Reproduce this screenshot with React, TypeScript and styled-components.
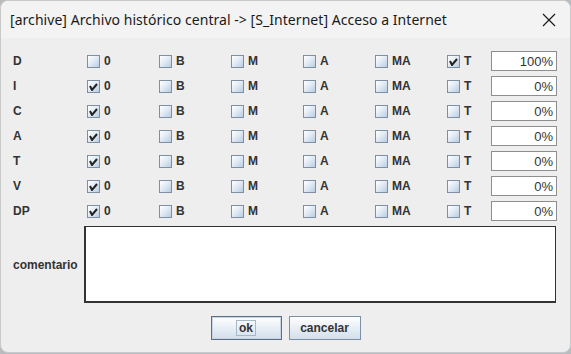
import React from 'react';
import styled, {createGlobalStyle} from 'styled-components';

const GlobalStyle = createGlobalStyle`
  html, body {
    margin: 0;
    padding: 0;
    background: #b9bcbf;
  }
  #root {
    width: 571px;
    height: 354px;
  }
`;

const Window = styled.div`
  box-sizing: border-box;
  width: 571px;
  height: 353px;
  background: #eeeeee;
  border: 1px solid #c9c9c9;
  border-radius: 8px;
  overflow: hidden;
  display: flex;
  flex-direction: column;
`;

const TitleBar = styled.header`
  height: 37px;
  display: flex;
  align-items: center;
  justify-content: space-between;
  padding: 0 14px 0 9px;
  background: #f3f3f3;
  font-family: 'Noto Sans', sans-serif;
  font-size: 14px;
  letter-spacing: 0.05px;
  color: #1a1a1a;
`;

const Body = styled.div`
  padding: 13px 14px 0 11px;
  display: flex;
  flex-direction: column;
  gap: 5px;
  font-family: 'Liberation Sans', Arial, sans-serif;
  font-size: 12px;
  font-weight: bold;
  color: #333333;
`;

const Row = styled.div`
  display: grid;
  grid-template-columns: 75px repeat(5, 72px) 44px 66px;
  height: 20px;
  align-items: center;
`;

const Label = styled.span`
  padding-left: 1px;
`;

const Check = styled.label`
  display: flex;
  align-items: center;
  gap: 4px;
`;

const Box = styled.span`
  box-sizing: border-box;
  width: 13px;
  height: 13px;
  border: 1px solid #7d8fa3;
  background: linear-gradient(135deg, #ffffff 0%, #e3ecf5 45%, #b8cde2 100%);
  display: flex;
  align-items: center;
  justify-content: center;
`;

const Field = styled.div`
  box-sizing: border-box;
  height: 20px;
  border: 1px solid #8e8e8e;
  background: #ffffff;
  text-align: right;
  padding: 2px 3px 0 0;
  font-weight: normal;
  font-size: 13px;
  color: #333333;
`;

const CommentRow = styled.div`
  display: grid;
  grid-template-columns: 72px 1fr;
  align-items: center;
  height: 77px;
`;

const CommentArea = styled.div`
  box-sizing: border-box;
  height: 77px;
  background: #ffffff;
  border: 1px solid #333333;
  border-width: 1px 1px 2px 2px;
`;

const Buttons = styled.div`
  display: flex;
  justify-content: center;
  gap: 7px;
  margin-top: 8px;
  padding-left: 3px;
`;

const Button = styled.button<{$focused?: boolean}>`
  box-sizing: border-box;
  width: ${(p) => (p.$focused ? 71 : 72)}px;
  height: 24px;
  font-family: 'Liberation Sans', Arial, sans-serif;
  font-size: 12px;
  font-weight: bold;
  color: #333333;
  border: 1px solid ${(p) => (p.$focused ? '#5c6f85' : '#7d8fa3')};
  box-shadow: ${(p) => (p.$focused ? 'inset 0 0 0 1px #c6d4e3' : 'none')};
  background: linear-gradient(#ffffff 0%, #eaf0f6 45%, #d2dfec 100%);
  padding: 0;
  display: flex;
  align-items: center;
  justify-content: center;
`;

const FocusText = styled.span`
  outline: 1px solid #a8b8cb;
  padding: 0 2px;
  line-height: 14px;
`;

const CheckMark = () => (
  <svg width="9" height="9" viewBox="0 0 9 9">
    <path d="M1 4 L3 8 L8 2" fill="none" stroke="#222" strokeWidth="2" />
  </svg>
);

const CheckBox = ({checked, label}: {checked: boolean; label: string}) => (
  <Check>
    <Box>{checked && <CheckMark />}</Box>
    <span>{label}</span>
  </Check>
);

const levels = ['0', 'B', 'M', 'A', 'MA', 'T'];

const rows: {name: string; sel: string; value: string}[] = [
  {name: 'D', sel: 'T', value: '100%'},
  {name: 'I', sel: '0', value: '0%'},
  {name: 'C', sel: '0', value: '0%'},
  {name: 'A', sel: '0', value: '0%'},
  {name: 'T', sel: '0', value: '0%'},
  {name: 'V', sel: '0', value: '0%'},
  {name: 'DP', sel: '0', value: '0%'},
];

const CloseIcon = () => (
  <svg width="14" height="14" viewBox="0 0 14 14">
    <path d="M1 1 L13 13 M13 1 L1 13" stroke="#1a1a1a" strokeWidth="1.2" />
  </svg>
);

export default function App() {
  return (
    <>
      <GlobalStyle />
      <Window>
        <TitleBar>
          <span>[archive] Archivo histórico central -&gt; [S_Internet] Acceso a Internet</span>
          <CloseIcon />
        </TitleBar>
        <Body>
          {rows.map((r) => (
            <Row key={r.name}>
              <Label>{r.name}</Label>
              {levels.map((l) => (
                <CheckBox key={l} label={l} checked={l === r.sel} />
              ))}
              <Field>{r.value}</Field>
            </Row>
          ))}
          <CommentRow>
            <Label>comentario</Label>
            <CommentArea />
          </CommentRow>
          <Buttons>
            <Button $focused>
              <FocusText>ok</FocusText>
            </Button>
            <Button>cancelar</Button>
          </Buttons>
        </Body>
      </Window>
    </>
  );
}
